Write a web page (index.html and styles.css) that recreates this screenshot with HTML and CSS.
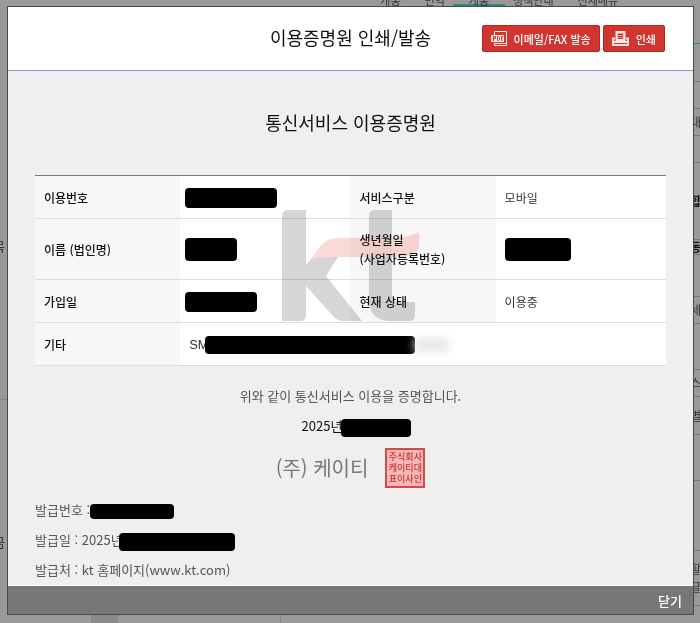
FILE: index.html
```
<!DOCTYPE html>
<html lang="ko">

<head>
  <meta charset="utf-8">
  <meta name="viewport" content="width=device-width, initial-scale=1.0">
  <title>이용증명원 인쇄/발송</title>
  <link rel="stylesheet" href="styles.css">
</head>

<body>
  <!-- page under the popup -->
  <div class="page" aria-hidden="true">
    <div class="page-nav">
      <span>개통</span><span>번역</span><span class="on">개통</span><span>정책안내</span><span>전체메뉴</span>
    </div>
    <div class="page-main">
      <div class="page-left">
        <p class="l1">목</p>
        <p class="l2">금</p>
      </div>
      <div class="page-right">
        <p class="teal"></p>
        <p class="h38"></p>
        <p class="h27"></p>
        <p class="h27">대</p>
        <p class="h27"></p>
        <p class="h77 strong">합</p>
        <p class="h15 strong">동</p>
        <p class="h42"></p>
        <p class="h27">세</p>
        <p class="h46"></p>
        <p class="h27">스</p>
        <p class="h38">별</p>
        <p class="h46"></p>
        <p class="h70"></p>
        <p class="h55">할<br>글</p>
      </div>
    </div>
    <div class="page-bottom"><i></i><b></b></div>
  </div>

  <div class="popup">
    <div class="popup-head">
      <h1>이용증명원 인쇄/발송</h1>
      <div class="head-btns">
        <button type="button" class="btn">
          <svg width="16" height="16" viewBox="0 0 16 16" fill="none" stroke="#ffe9e6">
            <path d="M3.500 4V.500h12v14h-12V12M3.500 12.500h12" />
            <path d="M0 4h13v7H0z" fill="#ffe9e6" stroke="none" />
            <path d="M2.500 10V5.500h2v2h-2M6.500 5.500h1l1 1v2l-1 1h-1zM10.500 10V5.500h2M10.500 7.500h1" stroke="#d03530" />
          </svg>
          이메일/FAX 발송
        </button>
        <button type="button" class="btn">
          <svg width="17" height="15" viewBox="0 0 17 15" fill="none" stroke="#ffe9e6">
            <path d="M4.500 9V1h8v8z" stroke-width="2" fill="#e88f8a" />
            <path d="M6 3.500h5M6 5.500h5M6 7.500h5" stroke="#d03530" />
            <path d="M3 7.500H1V14h15V7.500h-2M1 11h15" stroke-width="2" />
          </svg>
          인쇄
        </button>
      </div>
    </div>

    <div class="popup-body">
      <h2>통신서비스 이용증명원</h2>

      <div class="table-wrap">
        <table>
          <tr>
            <th scope="row">이용번호</th>
            <td><span class="bar w92"></span></td>
            <th scope="row">서비스구분</th>
            <td>모바일</td>
          </tr>
          <tr class="tall">
            <th scope="row">이름 (법인명)</th>
            <td><span class="bar big w52"></span></td>
            <th scope="row">생년월일<br>(사업자등록번호)</th>
            <td><span class="bar big w66"></span></td>
          </tr>
          <tr>
            <th scope="row">가입일</th>
            <td><span class="bar w72"></span></td>
            <th scope="row">현재 상태</th>
            <td>이용중</td>
          </tr>
          <tr>
            <th scope="row">기타</th>
            <td colspan="3" class="etc">SM<span class="bar w210"></span><span class="smudge"></span></td>
          </tr>
        </table>
        <svg class="watermark" width="138" height="113" viewBox="0 0 138 113">
          <path fill="#d6d6d6" d="M0 7Q0 1 6 1H24V56L30 49Q34 47 56 48L44 67L80 112H62Q55 112 51 107L24 77V106Q24 112 18 112H0Z" />
          <path fill="#d6d6d6" d="M87 7Q87 1 93 1H110V87Q110 93 116 93H133V106Q133 112 127 112H109Q87 112 87 90Z" />
          <path fill="#f9d3cd" fill-opacity=".85" d="M28 51C35 43 41 29 54 29H112Q126 29 137 23V39Q131 48 119 48H54Q39 48 28 51Z" />
        </svg>
      </div>

      <div class="confirm">
        <p>위와 같이 통신서비스 이용을 증명합니다.</p>
        <p class="date">2025년<span class="bar small w70"></span></p>
        <div class="company">
          <span>(주) 케이티</span>
          <span class="seal">주식회사<br>케이티대<br>표이사인</span>
        </div>
      </div>

      <ul class="issue">
        <li>발급번호 :<span class="bar slim w84"></span></li>
        <li>발급일 : 2025년<span class="bar small w116"></span></li>
        <li>발급처 : kt 홈페이지(www.kt.com)</li>
      </ul>
    </div>

    <div class="popup-foot">
      <button type="button" class="close">닫기</button>
    </div>
  </div>
</body>

</html>
```
FILE: styles.css
```
* {
  box-sizing: border-box;
}

body {
  margin: 0;
  background: #999;
  font-family: "Noto Sans CJK KR", "Noto Sans", sans-serif;
  font-size: 13px;
  color: #555;
}

h1,
h2,
p,
ul {
  margin: 0;
  padding: 0;
  font-weight: normal;
}

/* page under the popup */
.page {
  display: flex;
  flex-direction: column;
  height: 100vh;
  overflow: hidden;
  color: #333;
}

.page-nav {
  display: flex;
  justify-content: flex-end;
  gap: 24px;
  height: 6px;
  padding-right: 82px;
  font-size: 11px;
  line-height: 0;
  overflow: hidden;
}

.page-nav .on {
  border-bottom: 2px solid #2a8c85;
  padding: 0 16px;
  margin: 0 -16px;
}

.page-main {
  display: flex;
  justify-content: space-between;
  flex: 1;
  min-height: 0;
}

.page-left,
.page-right {
  width: 7px;
  overflow: hidden;
}

.page-left p {
  width: 14px;
  margin-left: -7px;
}

.page-left .l1 {
  height: 394px;
  padding-top: 230px;
  border-bottom: 1px solid #858585;
}

.page-left .l2 {
  padding-top: 132px;
}

.page-right p {
  width: 14px;
  margin-left: -3px;
  font-size: 12px;
  line-height: 18px;
  border-bottom: 1px solid #777;
  display: flex;
  align-items: center;
}

.page-right .teal {
  height: 38px;
  border-color: #2a8c85;
}

.page-right .strong {
  font-weight: bold;
  color: #111;
}

.h15 { height: 15px; }
.h27 { height: 27px; }
.h38 { height: 38px; }
.h42 { height: 42px; }
.h46 { height: 46px; }
.h55 { height: 55px; }
.h70 { height: 70px; }
.h77 { height: 77px; }

.page-bottom {
  display: flex;
  height: 9px;
  padding-left: 91px;
}

.page-bottom i {
  width: 27px;
  background: #8a8a8a;
}

.page-bottom b {
  width: 163px;
  border-right: 1px solid #8a8a8a;
}

/* popup */
.popup {
  position: absolute;
  top: 6px;
  right: 6px;
  bottom: 8px;
  left: 7px;
  display: flex;
  flex-direction: column;
  border: 1px solid #4a4a4a;
  background: #efefef;
}

.popup-head {
  display: grid;
  grid-template-columns: 1fr auto 1fr;
  align-items: center;
  height: 65px;
  padding: 0 28px;
  background: #fff;
  border-bottom: 1px solid #7d9cc9;
}

.popup-head h1 {
  grid-column: 2;
  padding-bottom: 4px;
}

h1,
h2 {
  font-size: 18px;
  line-height: 30px;
  color: #111;
  text-align: center;
}

.head-btns {
  display: flex;
  justify-content: flex-end;
  gap: 3px;
}

.btn {
  display: flex;
  align-items: center;
  gap: 7px;
  height: 27px;
  padding: 0 8px;
  border: 1px solid #b92420;
  border-radius: 2px;
  background: #d03530;
  color: #fff;
  font-family: inherit;
  font-size: 11px;
  font-weight: 500;
  white-space: nowrap;
  cursor: pointer;
}

.popup-body {
  flex: 1;
  padding: 36px 27px 0;
  border-bottom: 1px solid #fff;
}

.table-wrap {
  position: relative;
  margin-top: 38px;
}

table {
  width: 100%;
  table-layout: fixed;
  border-collapse: collapse;
  border-top: 1px solid #777;
  background: #fff;
  font-size: 12px;
  line-height: 19px;
}

tr {
  height: 43px;
  border-bottom: 1px solid #ddd;
}

tr.tall {
  height: 61px;
}

th,
td {
  padding: 0 9px;
  text-align: left;
}

th {
  width: 23%;
  background: #f7f7f7;
  color: #111;
  font-weight: 500;
}

td {
  width: 27%;
  color: #333;
}

td.etc {
  font-family: "Liberation Sans", Arial, sans-serif;
  font-size: 13px;
}

.watermark {
  position: absolute;
  top: 34px;
  left: 50%;
  transform: translateX(-50%);
  mix-blend-mode: multiply;
}

/* blacked out values */
.bar {
  display: inline-block;
  height: 20px;
  border-radius: 4px;
  background: #000;
  vertical-align: middle;
}

.bar.big { height: 23px; }
.bar.small { height: 18px; }
.bar.slim { height: 15px; }

.w52 { width: 52px; }
.w66 { width: 66px; }
.w70 { width: 70px; }
.w72 { width: 72px; }
.w84 { width: 84px; }
.w92 { width: 92px; }
.w116 { width: 116px; }
.w210 { width: 210px; }

td:nth-child(2) .bar {
  margin-left: -4px;
}

.etc .bar {
  height: 18px;
}

.smudge {
  display: inline-block;
  width: 34px;
  height: 14px;
  background: #e8e8e8;
  vertical-align: middle;
  filter: blur(4px);
}

.confirm {
  padding-top: 15px;
  line-height: 30px;
  text-align: center;
}

.confirm .date {
  color: #111;
}

.date .bar {
  margin: 0 -12px 0 -1px;
}

.company {
  display: flex;
  justify-content: center;
  align-items: center;
  gap: 17px;
  height: 54px;
  font-size: 20px;
  color: #777;
}

.seal {
  width: 40px;
  height: 40px;
  padding-top: 1px;
  border: 2px solid #d34a4a;
  background: #f6b9b9;
  color: #c93434;
  font-size: 9px;
  font-weight: 500;
  line-height: 11px;
}

.issue {
  list-style: none;
  line-height: 30px;
}

.issue .small {
  margin-left: -4px;
}

.popup-foot {
  display: flex;
  justify-content: flex-end;
  height: 28px;
  background: #777;
}

.close {
  padding: 0 11px;
  border: 0;
  background: none;
  color: #fff;
  font-family: inherit;
  font-size: 13px;
  font-weight: 500;
  cursor: pointer;
}
```
